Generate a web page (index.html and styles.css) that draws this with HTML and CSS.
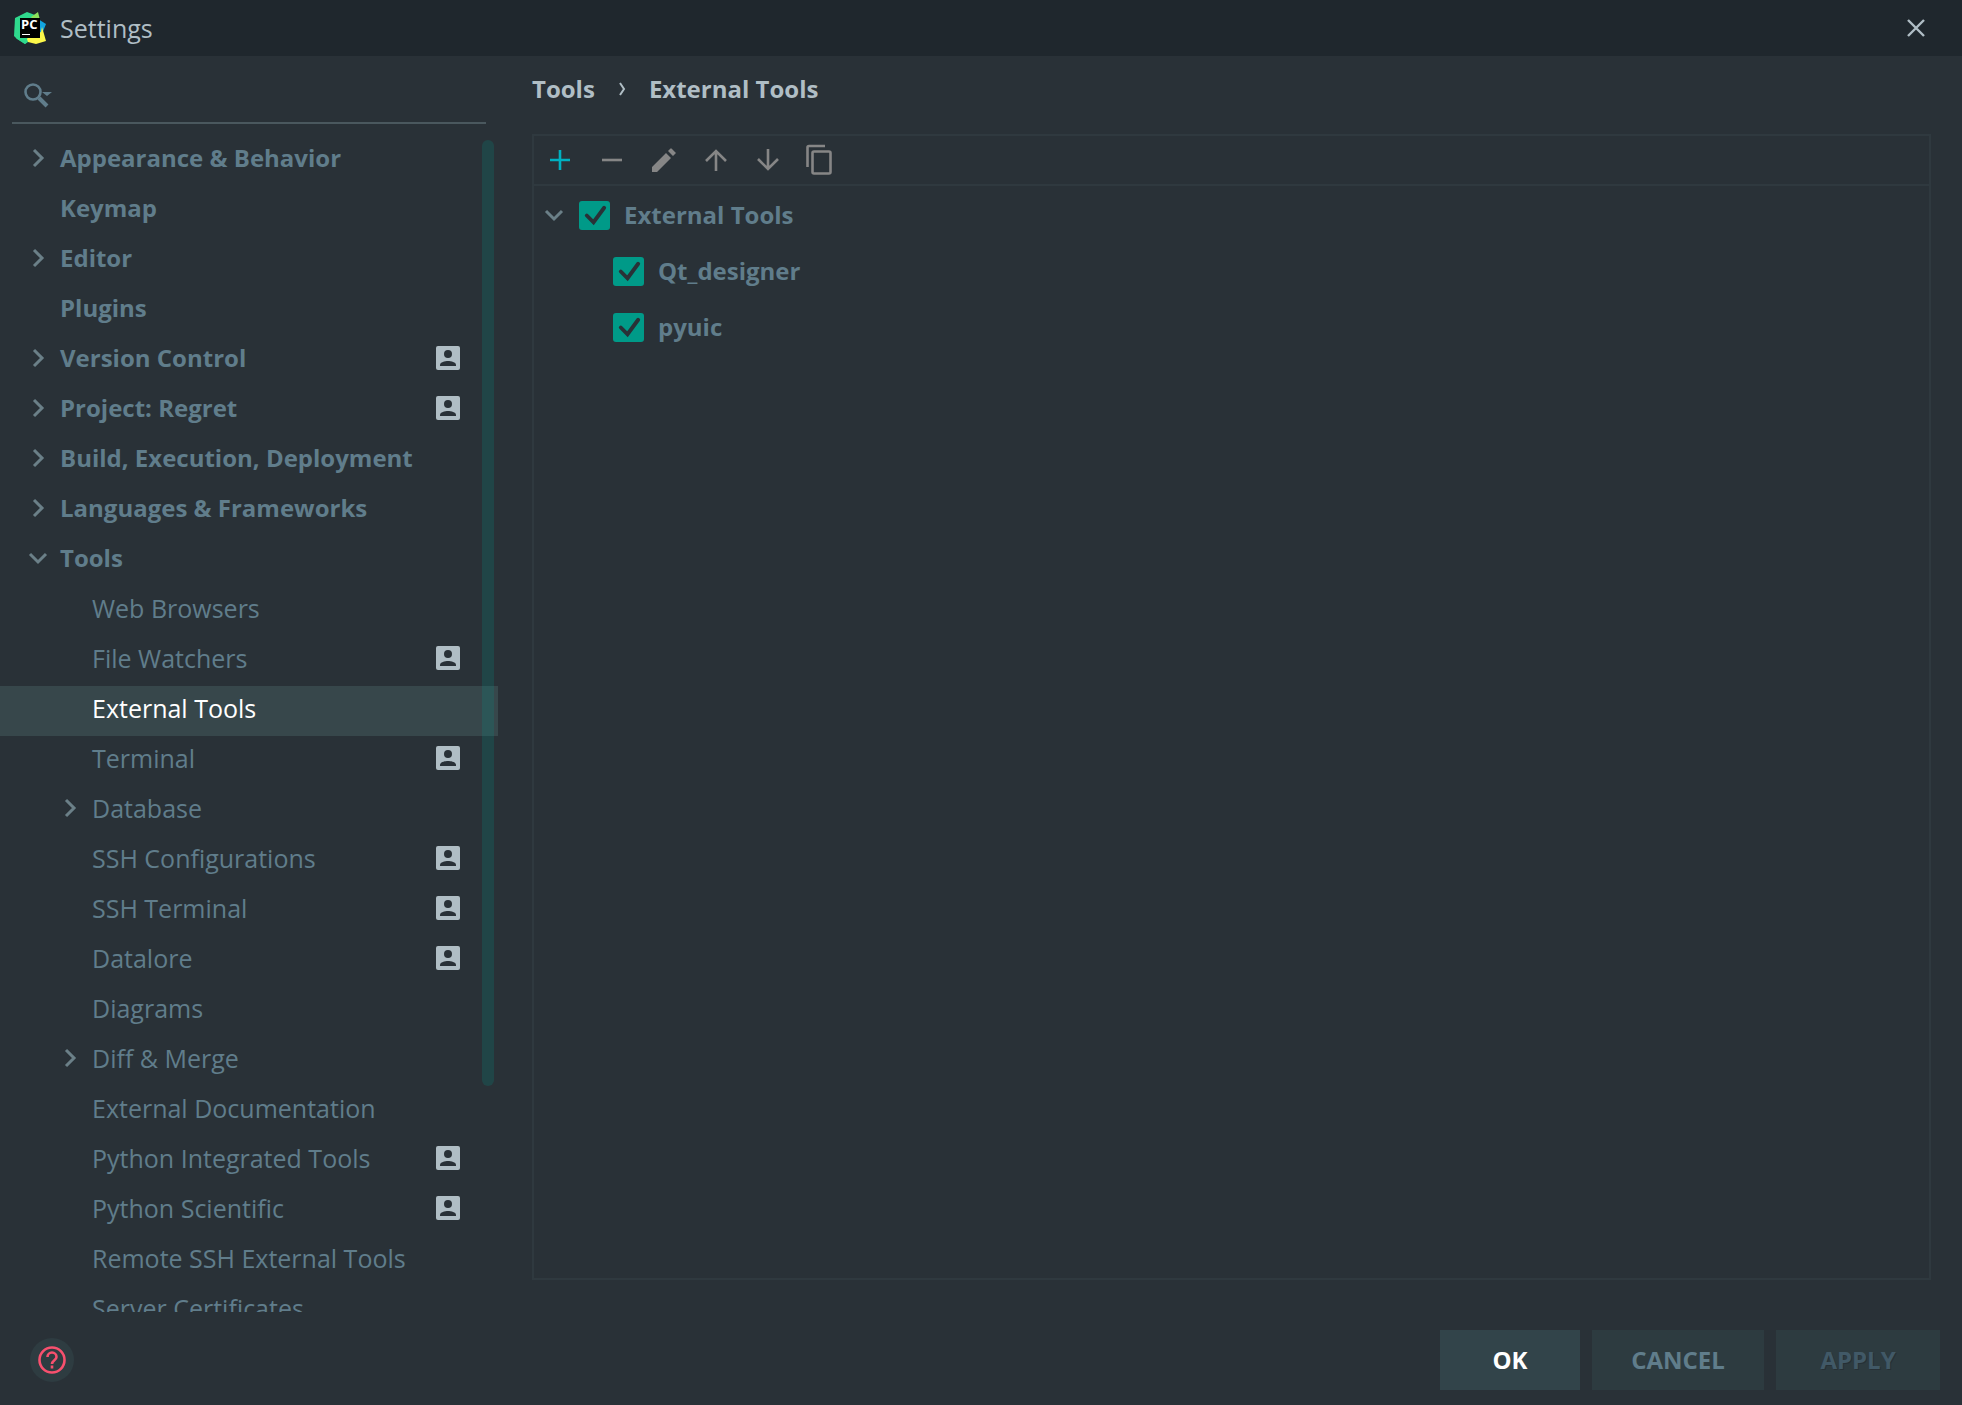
FILE: index.html
```html
<!DOCTYPE html>
<html lang="en">
<head>
  <meta charset="UTF-8">
  <meta name="viewport" content="width=device-width, initial-scale=1.0">
  <title>Settings</title>
  <link rel="stylesheet" href="styles.css">
</head>
<body>

<!-- shared icons -->
<svg class="sprite" aria-hidden="true">
  <symbol id="chevron" viewBox="0 0 20 20">
    <path d="M6 2l8 8-8 8" fill="none" stroke="currentColor" stroke-width="3"/>
  </symbol>
  <symbol id="person" viewBox="0 0 24 24">
    <rect width="24" height="24" rx="2" fill="#b0bec5"/>
    <circle cx="12" cy="8" r="4" fill="#293137"/>
    <path d="M4 20v-1c0-3 5-4 8-4s8 1 8 4v1z" fill="#293137"/>
  </symbol>
  <symbol id="check" viewBox="0 0 30 30">
    <path d="M7 15l7 7L25 7" fill="none" stroke="#293137" stroke-width="4" stroke-linecap="round"/>
  </symbol>
</svg>

<header class="titlebar">
  <svg class="logo" viewBox="0 0 32 32">
    <path d="M1 6L13 0l8 3 3 17L11 32 3 27 0 24z" fill="#2fd98d"/>
    <path d="M17 5l7-5 2 8-5 3z" fill="#8be05a"/>
    <path d="M24 7l8 5-4 10-6-4z" fill="#12a5e0"/>
    <path d="M28 15l4 14-10 3-12-3 8-6 9-3z" fill="#fcf84a"/>
    <path d="M2 20l10 4 2 6-3 2-9-6z" fill="#2fd98d"/>
    <rect x="6" y="6" width="20" height="20" fill="#000"/>
    <rect x="8" y="22" width="8" height="1" fill="#fff"/>
    <text x="7" y="17" class="logo-text">PC</text>
  </svg>
  <h1>Settings</h1>
  <button class="close" type="button" aria-label="Close">
    <svg width="18" height="18" viewBox="0 0 18 18"><path d="M1 1l16 16M17 1L1 17" stroke="currentColor" stroke-width="2.4"/></svg>
  </button>
</header>

<div class="content">
  <aside class="sidebar">
    <label class="search">
      <svg width="28" height="26" viewBox="0 0 28 26">
        <circle cx="9" cy="9" r="7.500" fill="none" stroke="currentColor" stroke-width="2.600"/>
        <path d="M15 15l8 8" stroke="currentColor" stroke-width="4"/>
        <path d="M18 9h10l-5 4z" fill="currentColor"/>
      </svg>
      <input type="text" aria-label="Search settings">
    </label>

    <nav class="nav">
      <ul>
        <li><a href="#" class="group"><svg class="arrow"><use href="#chevron"/></svg>Appearance &amp; Behavior</a></li>
        <li><a href="#" class="group">Keymap</a></li>
        <li><a href="#" class="group"><svg class="arrow"><use href="#chevron"/></svg>Editor</a></li>
        <li><a href="#" class="group">Plugins</a></li>
        <li><a href="#" class="group"><svg class="arrow"><use href="#chevron"/></svg>Version Control<svg class="person"><use href="#person"/></svg></a></li>
        <li><a href="#" class="group"><svg class="arrow"><use href="#chevron"/></svg>Project: Regret<svg class="person"><use href="#person"/></svg></a></li>
        <li><a href="#" class="group"><svg class="arrow"><use href="#chevron"/></svg>Build, Execution, Deployment</a></li>
        <li><a href="#" class="group"><svg class="arrow"><use href="#chevron"/></svg>Languages &amp; Frameworks</a></li>
        <li>
          <a href="#" class="group"><svg class="arrow open"><use href="#chevron"/></svg>Tools</a>
          <ul class="sub">
            <li><a href="#">Web Browsers</a></li>
            <li><a href="#">File Watchers<svg class="person"><use href="#person"/></svg></a></li>
            <li><a href="#" class="selected">External Tools</a></li>
            <li><a href="#">Terminal<svg class="person"><use href="#person"/></svg></a></li>
            <li><a href="#"><svg class="arrow"><use href="#chevron"/></svg>Database</a></li>
            <li><a href="#">SSH Configurations<svg class="person"><use href="#person"/></svg></a></li>
            <li><a href="#">SSH Terminal<svg class="person"><use href="#person"/></svg></a></li>
            <li><a href="#">Datalore<svg class="person"><use href="#person"/></svg></a></li>
            <li><a href="#">Diagrams</a></li>
            <li><a href="#"><svg class="arrow"><use href="#chevron"/></svg>Diff &amp; Merge</a></li>
            <li><a href="#">External Documentation</a></li>
            <li><a href="#">Python Integrated Tools<svg class="person"><use href="#person"/></svg></a></li>
            <li><a href="#">Python Scientific<svg class="person"><use href="#person"/></svg></a></li>
            <li><a href="#">Remote SSH External Tools</a></li>
            <li><a href="#">Server Certificates</a></li>
          </ul>
        </li>
      </ul>
      <div class="scroll-thumb"></div>
    </nav>
  </aside>

  <main class="main">
    <div class="breadcrumbs">
      <a href="#">Tools</a>
      <svg width="6" height="12" viewBox="0 0 6 12"><path d="M1 0l4 6-4 6" fill="none" stroke="currentColor" stroke-width="2"/></svg>
      <span>External Tools</span>
    </div>

    <section class="panel">
      <div class="toolbar">
        <button type="button" class="add" aria-label="Add">
          <svg viewBox="0 0 28 28"><path d="M14 4v20M4 14h20" stroke="currentColor" stroke-width="2.600"/></svg>
        </button>
        <button type="button" aria-label="Remove">
          <svg viewBox="0 0 28 28"><path d="M4 14h20" stroke="currentColor" stroke-width="2.600"/></svg>
        </button>
        <button type="button" aria-label="Edit">
          <svg viewBox="0 0 28 28"><path d="M2 21v5h5L21 12l-5-5zM18 5l5 5 2-2c1-1 1-1 0-2l-3-3c-1-1-1-1-2 0z" fill="currentColor"/></svg>
        </button>
        <button type="button" aria-label="Move up">
          <svg viewBox="0 0 28 28"><path d="M14 25V5M4 15L14 5l10 10" fill="none" stroke="currentColor" stroke-width="2.6"/></svg>
        </button>
        <button type="button" aria-label="Move down">
          <svg viewBox="0 0 28 28"><path d="M14 3v20M4 13l10 10 10-10" fill="none" stroke="currentColor" stroke-width="2.6"/></svg>
        </button>
        <button type="button" aria-label="Copy">
          <svg viewBox="0 0 28 28"><path d="M1.500 21V1.500c0-1 0-1.500 1.500-1.500h16" fill="none" stroke="currentColor" stroke-width="2.600"/><rect x="6.500" y="5.500" width="18" height="22" rx="1.500" fill="none" stroke="currentColor" stroke-width="2.600"/></svg>
        </button>
      </div>

      <ul class="tools">
        <li>
          <div class="tool">
            <svg class="arrow open"><use href="#chevron"/></svg>
            <label><span class="box"><input type="checkbox" checked><svg><use href="#check"/></svg></span>External Tools</label>
          </div>
          <ul>
            <li class="tool"><label><span class="box"><input type="checkbox" checked><svg><use href="#check"/></svg></span>Qt_designer</label></li>
            <li class="tool"><label><span class="box"><input type="checkbox" checked><svg><use href="#check"/></svg></span>pyuic</label></li>
          </ul>
        </li>
      </ul>
    </section>
  </main>
</div>

<footer class="footer">
  <button class="help" type="button" aria-label="Help">
    <svg width="28" height="28" viewBox="0 0 28 28">
      <circle cx="14" cy="14" r="12.500" fill="none" stroke="currentColor" stroke-width="2.600"/>
      <path d="M9.500 11a4.500 4.500 0 0 1 9 0c0 3-4.500 3.500-4.500 7M14 19.500v3" fill="none" stroke="currentColor" stroke-width="2.600"/>
    </svg>
  </button>
  <button class="btn ok" type="button">OK</button>
  <button class="btn cancel" type="button">CANCEL</button>
  <button class="btn apply" type="button" disabled>APPLY</button>
</footer>

</body>
</html>
```
FILE: styles.css
```css
* {
  box-sizing: border-box;
}
body {
  margin: 0;
  height: 100vh;
  display: flex;
  flex-direction: column;
  background: #293137;
  color: #607d8b;
  font-family: "Open Sans", "Noto Sans", sans-serif;
  font-size: 25px;
  line-height: 34px;
}
ul {
  list-style: none;
  margin: 0;
  padding: 0;
}
a {
  color: inherit;
  text-decoration: none;
}
button {
  padding: 0;
  border: none;
  background: none;
  color: inherit;
  font: inherit;
  cursor: pointer;
}
svg {
  display: block;
  flex-shrink: 0;
  overflow: visible;
}
.sprite {
  display: none;
}

/* title bar */
.titlebar {
  display: flex;
  align-items: center;
  height: 56px;
  padding: 0 36px 0 14px;
  background: #1f272d;
  color: #b0bec5;
}
.titlebar h1 {
  flex: 1;
  margin: 0 0 0 14px;
  font-size: 25px;
  font-weight: 400;
}
.logo {
  width: 32px;
  height: 32px;
}
.logo-text {
  fill: #fff;
  font-size: 13px;
  font-weight: 700;
}
.close {
  padding: 1px;
}

.content {
  flex: 1;
  min-height: 0;
  display: flex;
}

/* left tree */
.sidebar {
  display: flex;
  flex-direction: column;
  width: 498px;
  flex-shrink: 0;
}
.search {
  display: flex;
  align-items: center;
  height: 68px;
  margin: 0 12px;
  padding: 14px 12px 0;
  border-bottom: 2px solid #4a585e;
}
.search input {
  flex: 1;
  margin-left: 8px;
  border: none;
  outline: none;
  background: transparent;
  color: #b0bec5;
  font: inherit;
}
.nav {
  position: relative;
  flex: 1;
  min-height: 0;
  margin-top: 12px;
  overflow: hidden;
}
.nav a {
  display: flex;
  align-items: center;
  height: 50px;
  padding: 0 38px 6px 60px;
}
.nav .group {
  font-size: 24px;
  font-weight: 700;
}
.nav .sub a {
  padding-left: 92px;
}
.nav .selected {
  background: #37474b;
  color: #fff;
}
.arrow {
  width: 20px;
  height: 20px;
  color: #6b8088;
}
.nav .arrow {
  margin: 0 12px 0 -32px;
}
.open {
  transform: rotate(90deg);
}
.person {
  width: 24px;
  height: 24px;
  margin-left: auto;
}
.scroll-thumb {
  position: absolute;
  top: 4px;
  right: 4px;
  width: 12px;
  height: 80.4%;
  border-radius: 6px;
  background: rgba(0, 150, 136, 0.2);
}

/* right side */
.main {
  flex: 1;
  display: flex;
  flex-direction: column;
  padding: 16px 31px 32px 34px;
}
.breadcrumbs {
  display: flex;
  align-items: center;
  gap: 24px;
  height: 34px;
  margin-bottom: 28px;
  color: #b0bec5;
  font-size: 24px;
  font-weight: 700;
}
.panel {
  flex: 1;
  border: 2px solid #2f393f;
}
.toolbar {
  display: flex;
  align-items: center;
  gap: 24px;
  height: 50px;
  padding-left: 12px;
  border-bottom: 2px solid #2f393f;
  color: #868686;
}
.toolbar svg {
  width: 28px;
  height: 28px;
}
.toolbar .add {
  color: #00b0c0;
}
.tools {
  padding: 1px 10px;
  font-size: 24px;
  font-weight: 700;
}
.tools ul {
  padding-left: 69px;
}
.tool {
  display: flex;
  align-items: center;
  gap: 15px;
  height: 56px;
}
.tool label {
  display: flex;
  align-items: center;
  gap: 14px;
}
.box {
  display: grid;
}
.box input,
.box svg {
  grid-area: 1 / 1;
  width: 31px;
  height: 29px;
  margin: 0;
}
.box input {
  appearance: none;
  border-radius: 3px;
  background: #009a88;
}
.box svg {
  pointer-events: none;
}
.box input:not(:checked) + svg {
  visibility: hidden;
}

/* bottom buttons */
.footer {
  display: flex;
  align-items: center;
  gap: 12px;
  height: 93px;
  padding: 2px 22px 0 30px;
}
.help {
  display: grid;
  place-items: center;
  width: 44px;
  height: 44px;
  margin-right: auto;
  border-radius: 50%;
  background: #2e3c41;
  color: #f7506e;
}
.btn {
  height: 60px;
  background: #2d3b40;
  font-size: 24px;
  font-weight: 700;
}
.ok {
  width: 140px;
  background: #32444a;
  color: #fff;
}
.cancel {
  width: 172px;
}
.apply {
  width: 164px;
  color: #415967;
  text-shadow: 1px 1px #263036;
}
```
